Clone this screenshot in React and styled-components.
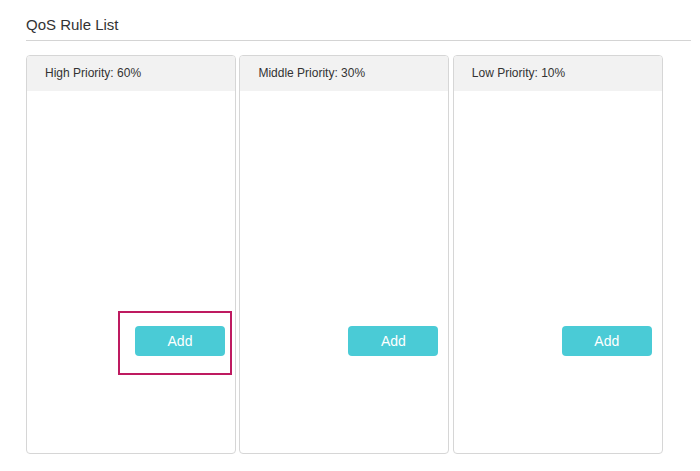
import React from 'react';
import styled, { createGlobalStyle } from 'styled-components';

const GlobalStyle = createGlobalStyle`
  body {
    margin: 0;
    background: #fff;
    font-family: "Liberation Sans", Arial, sans-serif;
    color: #333;
  }
`;

const priorities = [
  { name: 'High Priority', value: 60, highlight: true },
  { name: 'Middle Priority', value: 30 },
  { name: 'Low Priority', value: 10 },
];

const App = () => {
  return (
    <>
      <GlobalStyle />
      <Page>
        <Title>QoS Rule List</Title>
        <CardGrid>
          {priorities.map((p) => (
            <Card key={p.name}>
              <CardHeader>
                {p.name}: {p.value}%
              </CardHeader>
              <CardBody>
                <ButtonWrap>
                  {p.highlight && <Highlight />}
                  <AddButton type="button">Add</AddButton>
                </ButtonWrap>
              </CardBody>
            </Card>
          ))}
        </CardGrid>
      </Page>
    </>
  );
};
export default App;

const Page = styled.div`
  padding: 0 9px 0 26px;
`;

const Title = styled.h2`
  margin: 0;
  padding: 15px 0 5px;
  font-size: 15px;
  line-height: 20px;
  font-weight: normal;
  color: #333;
  border-bottom: 1px solid #d4d4d4;
`;

const CardGrid = styled.div`
  display: flex;
  flex-flow: row nowrap;
  gap: 3.4px;
  margin-top: 14px;
`;

const Card = styled.div`
  width: 210px;
  height: 399px;
  box-sizing: border-box;
  border: 1px solid #d6d6d6;
  border-radius: 4px;
  overflow: hidden;
  display: flex;
  flex-direction: column;
`;

const CardHeader = styled.div`
  height: 35px;
  line-height: 35px;
  padding-left: 18px;
  background-color: #f2f2f2;
  font-size: 12px;
  color: #333;
`;

const CardBody = styled.div`
  display: flex;
  justify-content: flex-end;
  padding: 235px 10px 0;
`;

const ButtonWrap = styled.div`
  position: relative;
`;

const Highlight = styled.div`
  position: absolute;
  top: -15px;
  left: -17px;
  right: -7px;
  bottom: -19px;
  border: 2px solid #be1a60;
  pointer-events: none;
`;

const AddButton = styled.button`
  display: block;
  width: 90px;
  height: 30px;
  padding: 0;
  border: none;
  border-radius: 4px;
  background-color: #4acbd6;
  color: #fff;
  font-family: "Liberation Sans", Arial, sans-serif;
  font-size: 14px;
  cursor: pointer;
`;
